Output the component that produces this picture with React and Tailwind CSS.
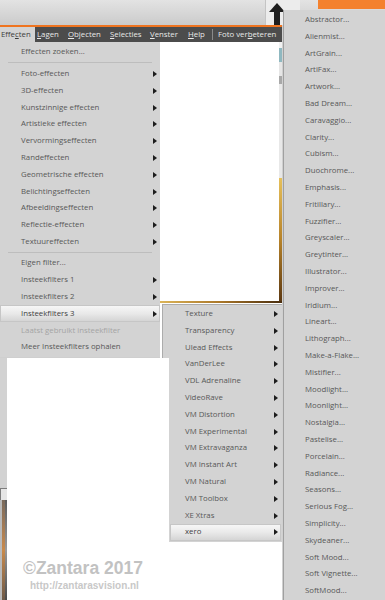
import clsx from 'clsx';

const effectenMenu = [
  { label: 'Effecten zoeken...' },
  { sep: true, h: 'h-[5.2px]' },
  { label: 'Foto-effecten', arrow: true },
  { label: '3D-effecten', arrow: true },
  { label: 'Kunstzinnige effecten', arrow: true },
  { label: 'Artistieke effecten', arrow: true },
  { label: 'Vervormingseffecten', arrow: true },
  { label: 'Randeffecten', arrow: true },
  { label: 'Geometrische effecten', arrow: true },
  { label: 'Belichtingseffecten', arrow: true },
  { label: 'Afbeeldingseffecten', arrow: true },
  { label: 'Reflectie-effecten', arrow: true },
  { label: 'Textuureffecten', arrow: true },
  { sep: true, h: 'h-[4.6px]' },
  { label: 'Eigen filter...' },
  { label: 'Insteekfilters 1', arrow: true },
  { label: 'Insteekfilters 2', arrow: true },
  { label: 'Insteekfilters 3', arrow: true, active: true },
  { label: 'Laatst gebruikt insteekfilter', disabled: true },
  { label: 'Meer Insteekfilters ophalen' },
];

const pluginMenu = [
  'Texture', 'Transparency', 'Ulead Effects', 'VanDerLee', 'VDL Adrenaline', 'VideoRave',
  'VM Distortion', 'VM Experimental', 'VM Extravaganza', 'VM Instant Art', 'VM Natural',
  'VM Toolbox', 'XE Xtras', 'xero',
];

const xeroMenu = [
  'Abstractor...', 'Alienmist...', 'ArtGrain...', 'ArtiFax...', 'Artwork...', 'Bad Dream...',
  'Caravaggio...', 'Clarity...', 'Cubism...', 'Duochrome...', 'Emphasis...', 'Fritillary...',
  'Fuzzifier...', 'Greyscaler...', 'Greytinter...', 'Illustrator...', 'Improver...', 'Iridium...',
  'Lineart...', 'Lithograph...', 'Make-a-Flake...', 'Mistifier...', 'Moodlight...', 'Moonlight...',
  'Nostalgia...', 'Pastelise...', 'Porcelain...', 'Radiance...', 'Seasons...', 'Serious Fog...',
  'Simplicity...', 'Skydeaner...', 'Soft Mood...', 'Soft Vignette...', 'SoftMood...',
];

const Arrow = () => (
  <span className="h-0 w-0 border-y-[3px] border-l-[4px] border-y-transparent border-l-[#1c1c1c]" />
);

function Row({ label, arrow, disabled, active, className }) {
  return (
    <div
      className={clsx(
        'flex h-[16.8px] items-center justify-between',
        active && 'bg-linear-to-b from-[#f8f8f8] via-[#e9e9e9] to-[#d2d2d2] shadow-[inset_0_0_0_1px_#c6c6c6]',
        className
      )}
    >
      <span
        className={clsx(
          'whitespace-nowrap leading-none',
          disabled ? 'text-[#a4a4a4]' : active ? 'text-[#3e3e3e]' : 'text-[#585858]'
        )}
      >
        {label}
      </span>
      {arrow && <Arrow />}
    </div>
  );
}

const MenuBarItem = ({ children, className }) => (
  <div className={clsx('flex h-full items-center whitespace-nowrap', className)}>{children}</div>
);

export default function App() {
  return (
    <div className="relative h-[600px] w-[385px] overflow-hidden bg-[#cfcfcf] font-['Open_Sans',sans-serif] text-[7.8px]">
      {/* toolbar strip */}
      <div className="flex h-[25px] bg-linear-to-b from-[#e3e3e3] to-[#cbcbcb]">
        <div className="w-[265px] shrink-0" />
        <div className="flex h-[25px] w-[35px] shrink-0 flex-col border-l border-[#c4c4c4] bg-[#ececec] pl-[3px] pt-[3px]">
          {/* up arrow */}
          <div className="h-0 w-0 border-x-[8px] border-b-[9px] border-x-transparent border-b-[#1e1e1e]" />
          <div className="ml-[5px] h-[13px] w-[6px] bg-[#1e1e1e]" />
        </div>
        <div className="w-[18px] shrink-0" />
        <div className="h-[9px] flex-1 bg-[#f4812d]" />
      </div>
      <div className="h-[2px] w-[282px] bg-[#ef7420]" />

      {/* menu bar */}
      <div className="flex h-[15px] w-[282px] bg-[#4c4c4c] text-[#e8e8e8]">
        <MenuBarItem className="w-[35px] bg-[#d3d3d3] pl-[1px] text-[#3c3c3c]">
          Effe<u className="underline-offset-1">c</u>ten
        </MenuBarItem>
        <MenuBarItem className="w-[31px] pl-[2px]">
          <u className="underline-offset-1">L</u>agen
        </MenuBarItem>
        <MenuBarItem className="w-[42px] pl-[2px]">
          <u className="underline-offset-1">O</u>bjecten
        </MenuBarItem>
        <MenuBarItem className="w-[40px] pl-[2px]">
          <u className="underline-offset-1">S</u>electies
        </MenuBarItem>
        <MenuBarItem className="w-[38px] pl-[2px]">
          <u className="underline-offset-1">V</u>enster
        </MenuBarItem>
        <MenuBarItem className="w-[24px] pl-[2px]">
          <u className="underline-offset-1">H</u>elp
        </MenuBarItem>
        <MenuBarItem className="w-[6px] pl-[2px]">
          <span className="h-[11px] w-px bg-[#8a8a8a]" />
        </MenuBarItem>
        <MenuBarItem className="pl-[2px]">
          Foto ver<u className="underline-offset-1">b</u>eteren
        </MenuBarItem>
      </div>

      {/* workspace behind the menus */}
      <div className="flex h-[558px]">
        <div className="flex w-[160px] flex-col">
          <div className="h-[316px]" />
          <div className="flex flex-1">
            <div className="flex w-[7px] flex-col">
              <div className="h-[130px] bg-[#d2d2d2]" />
              <div className="h-[12px] border-l border-t border-[#7d7d7d] bg-[#e6e6e6]" />
              <div className="flex flex-1">
                <div className="w-[2px] bg-[#b9b9b9]" />
                <div className="w-[3px] bg-linear-to-b from-[#7a6a5c] via-[#c98a4a] to-[#6e5a48]" />
                <div className="flex-1 bg-linear-to-b from-[#5c5c5c] via-[#9a9a9a] to-[#4a4a4a]" />
              </div>
            </div>
          </div>
        </div>
        <div className="flex w-[122px] flex-col bg-white">
          <div className="flex h-[259px]">
            <div className="flex-1 bg-white" />
            <div className="flex w-[3px] flex-col">
              <div className="h-[6px] bg-[#f2f2f2]" />
              <div className="h-[14px] bg-[#8fb8c0]" />
              <div className="h-[14px] bg-[#e6e6e6]" />
              <div className="h-[8px] bg-[#a8a8a8]" />
              <div className="h-[94px] bg-[#e8e8e8]" />
              <div className="flex-1 bg-linear-to-b from-[#e6c05a] via-[#b7832a] to-[#5e3a12]" />
            </div>
          </div>
          <div className="h-[2px] bg-linear-to-r from-[#dcb558] via-[#a97628] to-[#4a2e0e]" />
          <div className="flex-1 bg-white" />
        </div>
        <div className="flex-1 bg-[#d0d0d0]" />
      </div>

      {/* Effecten dropdown */}
      <div className="absolute left-0 top-[42px] h-[315px] w-[160px] bg-[#d3d3d3] pt-[1.6px]">
        {effectenMenu.map((it, i) =>
          it.sep ? (
            <div key={i} className={clsx('flex items-center px-[8px]', it.h)}>
              <div className="h-px w-full bg-[#bdbdbd]" />
            </div>
          ) : (
            <Row key={i} {...it} className="pl-[21px] pr-[3px]" />
          )
        )}
      </div>

      {/* Insteekfilters 3 submenu */}
      <div className="absolute left-[162px] top-[304px] w-[120px] border-l border-t border-[#acacac] bg-[#d3d3d3] pb-[1px] pt-[0.6px]">
        {pluginMenu.map((label) => (
          <Row
            key={label}
            label={label}
            arrow
            active={label === 'xero'}
            className="ml-[7px] mr-px pl-[15px] pr-[3px]"
          />
        ))}
      </div>

      {/* xero submenu */}
      <div className="absolute left-[283px] top-[10px] h-[600px] w-[102px] border-l border-[#a0a0a0] bg-[#d3d3d3] pt-[1.6px]">
        {xeroMenu.map((label) => (
          <Row key={label} label={label} className="pl-[21px]" />
        ))}
      </div>

      {/* watermark panel */}
      <div className="absolute left-[7px] top-[358px] flex h-[242px] w-[162px] flex-col justify-end bg-white pb-[8px] pl-[16px]">
        <div className="font-['Liberation_Sans',sans-serif] text-[17.5px] font-bold leading-[21px] text-[#c2c2c2]">
          ©Zantara 2017
        </div>
        <div className="ml-[7px] mt-[1px] font-['Liberation_Sans',sans-serif] text-[10px] font-bold leading-[12px] text-[#c8c8c8]">
          http://zantarasvision.nl
        </div>
      </div>
    </div>
  );
}
